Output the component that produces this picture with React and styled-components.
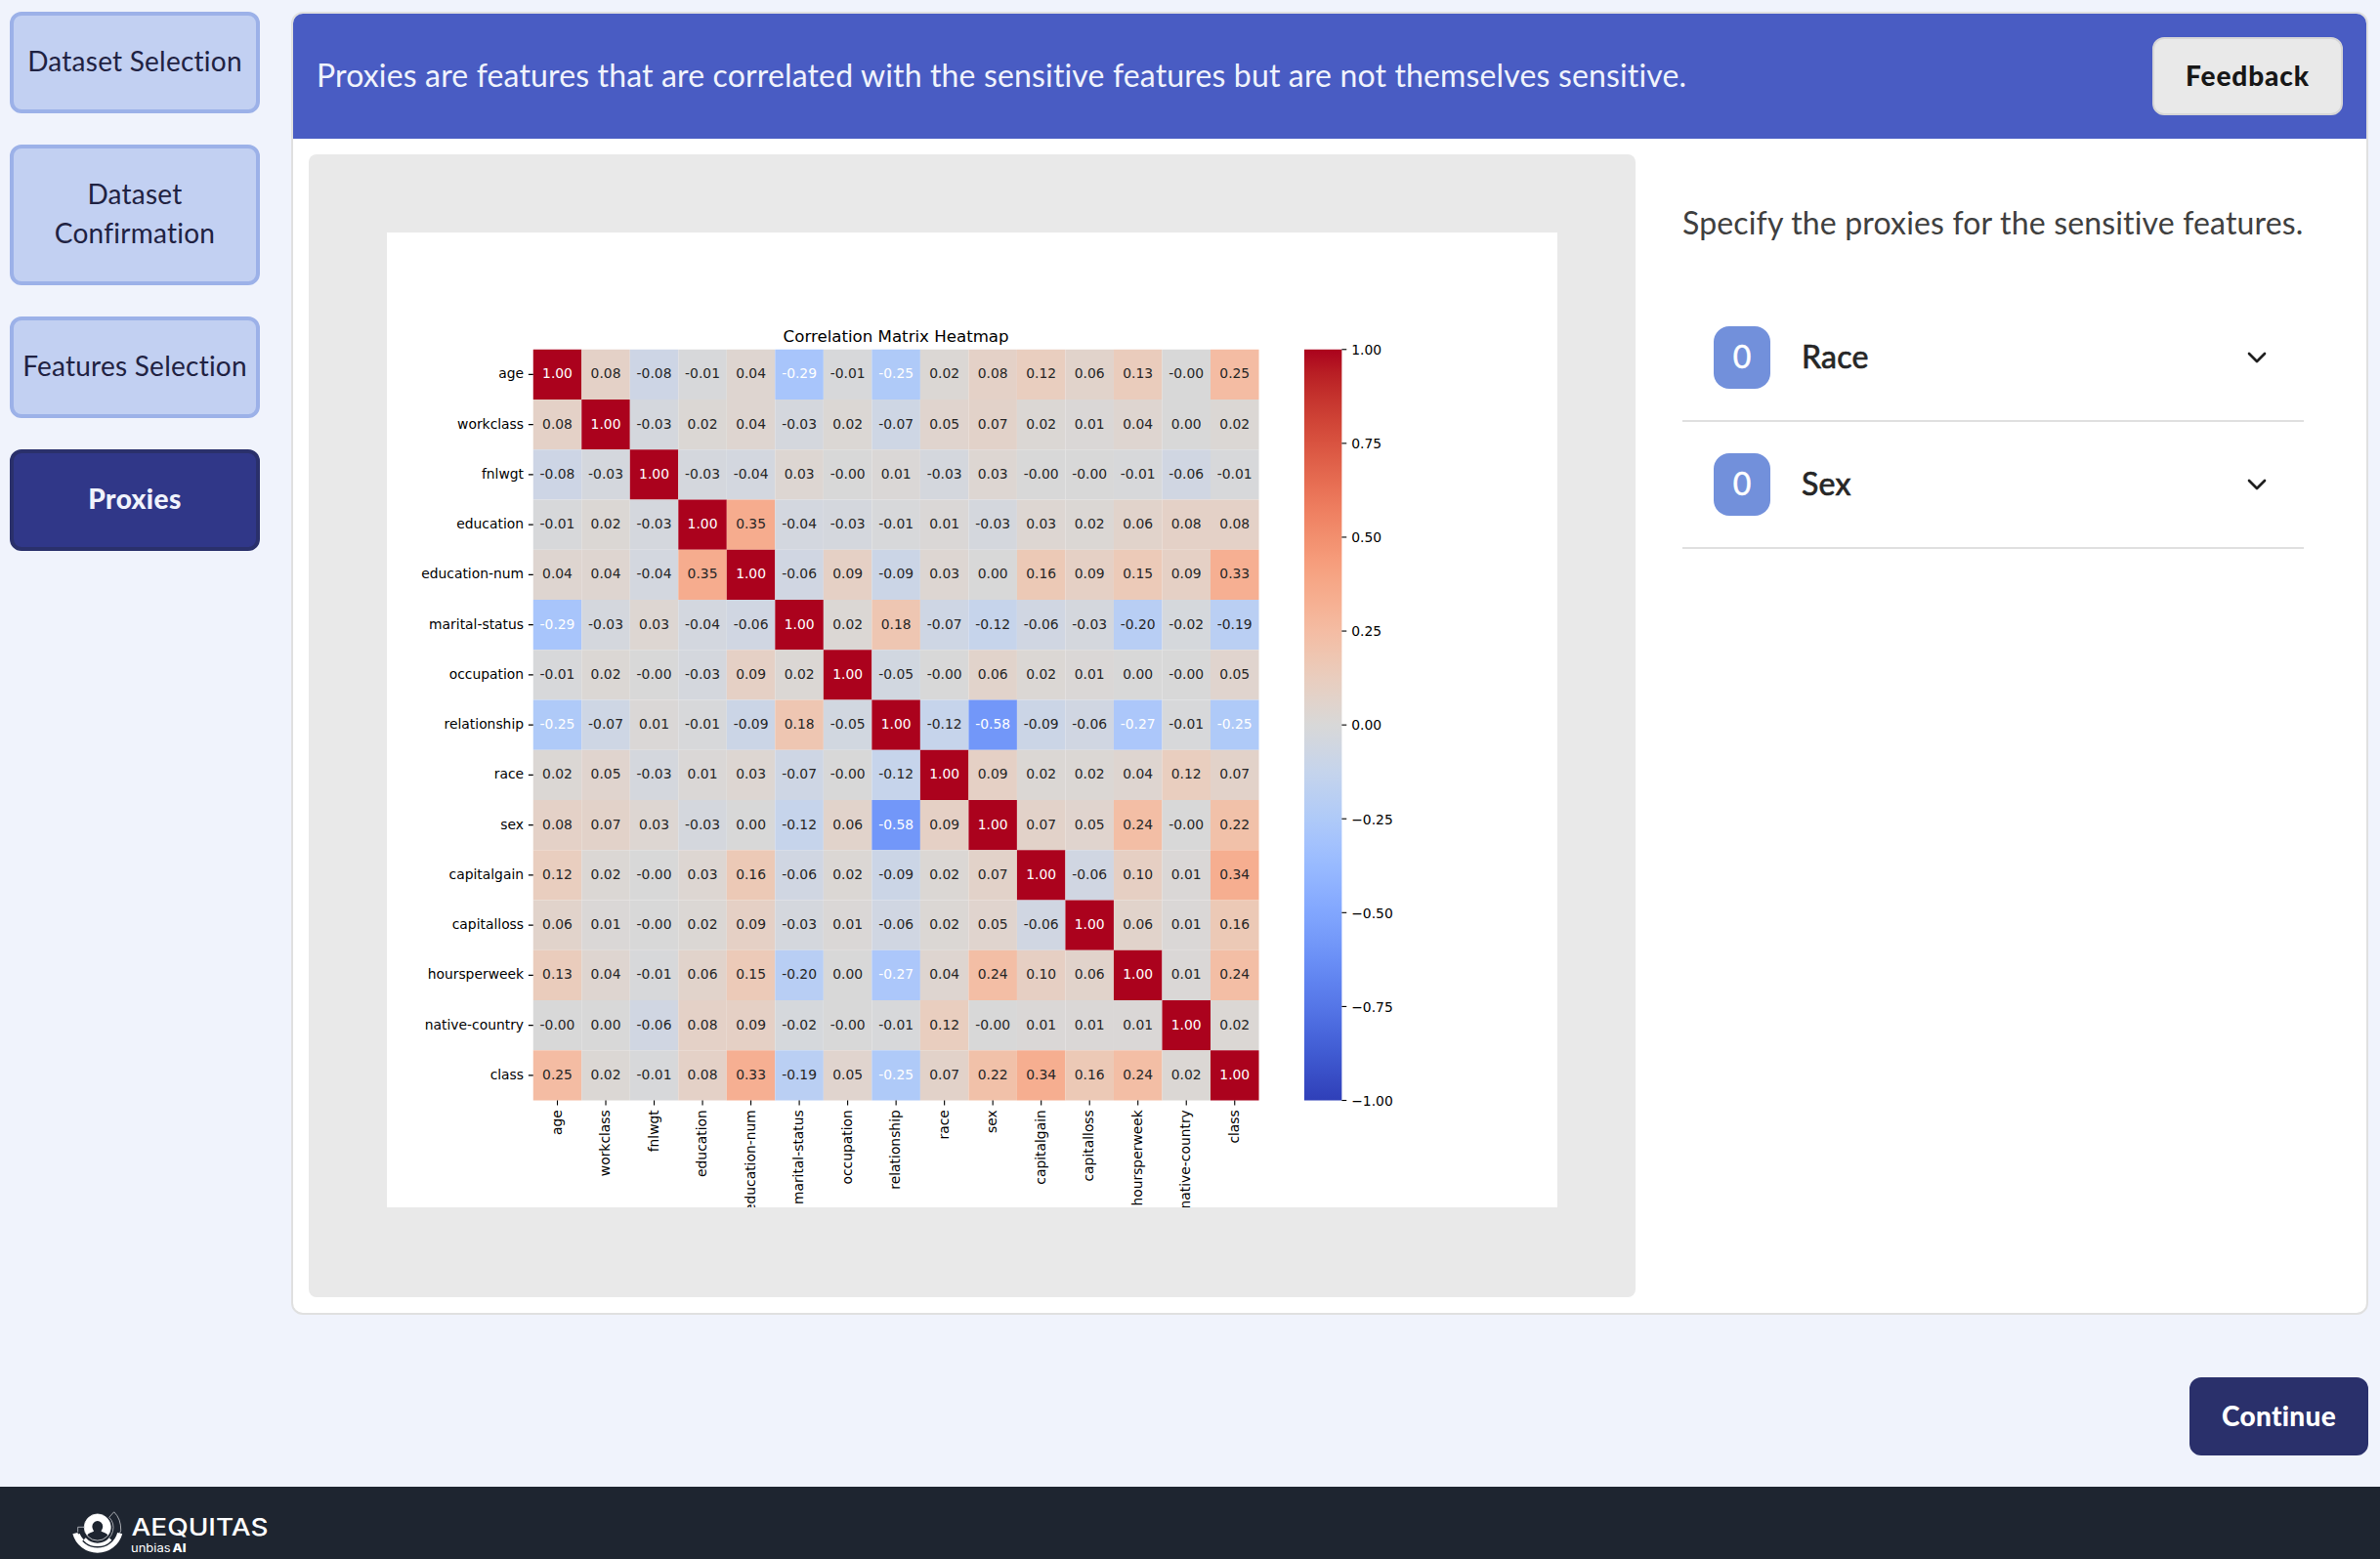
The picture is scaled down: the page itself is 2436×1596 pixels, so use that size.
import React from "react";
import styled, { createGlobalStyle } from "styled-components";

const GlobalStyle = createGlobalStyle`
  * { box-sizing: border-box; }
  body {
    margin: 0;
    background: #f0f3fc;
    font-family: Lato, "Open Sans", sans-serif;
    color: #1f2242;
  }
`;

const Page = styled.div`
  display: flex;
  flex-direction: column;
  height: 1596px;
  overflow: hidden;
`;

const Workspace = styled.div`
  display: flex;
  gap: 32px;
  height: 1522px;
  padding: 12px 12px 0 10px;
`;

const Sidebar = styled.nav`
  display: flex;
  flex-direction: column;
  gap: 32px;
  width: 256px;
  flex: none;
`;

const Step = styled.button`
  min-height: 104px;
  padding: 26px 4px 30px;
  border: 4px solid ${(p) => (p.$active ? "#2a306b" : "#9cb1e8")};
  border-radius: 12px;
  background: ${(p) => (p.$active ? "#303788" : "#c2d0f2")};
  color: ${(p) => (p.$active ? "#f0f3fc" : "#1f2242")};
  font: ${(p) => (p.$active ? 900 : 400)} 28px/40px Lato, sans-serif;
  letter-spacing: ${(p) => (p.$active ? 0.4 : 0.24)}px;
`;

const Main = styled.main`
  display: flex;
  flex-direction: column;
  flex: 1;
  min-width: 0;
  align-items: flex-end;
`;

const Card = styled.section`
  display: flex;
  flex-direction: column;
  width: 100%;
  height: 1334px;
  border: 2px solid #e0e0e0;
  border-radius: 12px;
  background: #fff;
  overflow: hidden;
`;

const CardHeader = styled.header`
  display: flex;
  align-items: center;
  justify-content: space-between;
  height: 128px;
  flex: none;
  padding: 0 24px;
  background: #495cc3;
`;

const HeaderText = styled.p`
  margin: 0;
  padding-bottom: 3px;
  color: #f0f3fc;
  font-size: 32px;
  line-height: 48px;
  letter-spacing: 0.15px;
  white-space: nowrap;
`;

const Button = styled.button`
  height: 80px;
  width: ${(p) => p.$width}px;
  padding: 0 0 3px;
  border: 2px solid ${(p) => (p.$primary ? "#2a306b" : "#d6d6d6")};
  border-radius: 12px;
  background: ${(p) => (p.$primary ? "#2a306b" : "#e9e9e9")};
  color: ${(p) => (p.$primary ? "#fff" : "#171717")};
  font: 900 28px/40px Lato, sans-serif;
  letter-spacing: ${(p) => (p.$primary ? 0.3 : 0.9)}px;
`;

const CardBody = styled.div`
  display: flex;
  flex: 1;
  gap: 48px;
  padding: 16px 64px 16px 16px;
`;

const Figure = styled.figure`
  width: 1358px;
  height: 1170px;
  flex: none;
  margin: 0;
  padding: 80px;
  border-radius: 8px;
  background: #e9e9e9;
`;

const Chart = styled.svg`
  display: block;
  width: 1198px;
  height: 998px;
  background: #fff;
  font-family: "DejaVu Sans", sans-serif;
  font-size: 13.889px;
`;

const Panel = styled.aside`
  flex: 1;
  min-width: 0;
  padding-top: 46px;
`;

const Prompt = styled.p`
  margin: 0 0 50px;
  color: #404040;
  font-size: 32px;
  line-height: 48px;
  letter-spacing: 0.16px;
  white-space: nowrap;
`;

const FeatureRow = styled.div`
  display: flex;
  align-items: center;
  gap: 32px;
  height: 130px;
  padding: 0 32px;
  border-bottom: 2px solid #e0e0e0;
`;

const Count = styled.span`
  display: flex;
  align-items: center;
  justify-content: center;
  width: 58px;
  height: 64px;
  padding-bottom: 3px;
  border-radius: 16px;
  background: #7290db;
  color: #fff;
  font-size: 32px;
  -webkit-text-stroke: 0.5px #fff;
`;

const FeatureName = styled.span`
  flex: 1;
  padding-bottom: 3px;
  color: #262626;
  font-size: 32px;
  letter-spacing: 0.3px;
  -webkit-text-stroke: 0.7px #262626;
`;

const Chevron = styled.svg`
  width: 32px;
  height: 32px;
  fill: none;
  stroke: #1f1f1f;
  stroke-width: 2;
  stroke-linecap: round;
  stroke-linejoin: round;
`;

const ContinueSlot = styled.div`
  margin-top: 64px;
`;

const Footer = styled.footer`
  display: flex;
  height: 74px;
  padding: 22px 0 0 72px;
  background: #1e2530;
`;

const Logo = styled.svg`
  width: 206px;
  height: 50px;
  overflow: visible;
`;

const FEATURES = [
  "age", "workclass", "fnlwgt", "education", "education-num",
  "marital-status", "occupation", "relationship", "race", "sex",
  "capitalgain", "capitalloss", "hoursperweek", "native-country", "class",
];

// Lower triangle of the symmetric correlation matrix, diagonal included.
const CORRELATION = [
  "1.00",
  "0.08 1.00",
  "-0.08 -0.03 1.00",
  "-0.01 0.02 -0.03 1.00",
  "0.04 0.04 -0.04 0.35 1.00",
  "-0.29 -0.03 0.03 -0.04 -0.06 1.00",
  "-0.01 0.02 -0.00 -0.03 0.09 0.02 1.00",
  "-0.25 -0.07 0.01 -0.01 -0.09 0.18 -0.05 1.00",
  "0.02 0.05 -0.03 0.01 0.03 -0.07 -0.00 -0.12 1.00",
  "0.08 0.07 0.03 -0.03 0.00 -0.12 0.06 -0.58 0.09 1.00",
  "0.12 0.02 -0.00 0.03 0.16 -0.06 0.02 -0.09 0.02 0.07 1.00",
  "0.06 0.01 -0.00 0.02 0.09 -0.03 0.01 -0.06 0.02 0.05 -0.06 1.00",
  "0.13 0.04 -0.01 0.06 0.15 -0.20 0.00 -0.27 0.04 0.24 0.10 0.06 1.00",
  "-0.00 0.00 -0.06 0.08 0.09 -0.02 -0.00 -0.01 0.12 -0.00 0.01 0.01 0.01 1.00",
  "0.25 0.02 -0.01 0.08 0.33 -0.19 0.05 -0.25 0.07 0.22 0.34 0.16 0.24 0.02 1.00",
].map((row) => row.split(" "));

const COOLWARM = [
  [59, 76, 192], [68, 90, 204], [77, 104, 215], [87, 117, 225], [98, 130, 234],
  [108, 142, 241], [119, 154, 247], [130, 165, 251], [141, 176, 254],
  [152, 185, 255], [163, 194, 255], [174, 201, 253], [184, 208, 249],
  [194, 213, 244], [204, 217, 238], [213, 219, 230], [221, 221, 221],
  [229, 216, 209], [236, 211, 197], [241, 204, 185], [245, 196, 173],
  [247, 187, 160], [247, 177, 148], [247, 166, 135], [244, 154, 123],
  [241, 141, 111], [236, 127, 99], [229, 112, 88], [222, 96, 77],
  [213, 80, 66], [203, 62, 56], [192, 40, 47], [180, 4, 38],
];

const tone = (c) => Math.round(255 * Math.pow(c / 255, 1.15));

function colorAt(value) {
  const position = ((value + 1) / 2) * (COOLWARM.length - 1);
  const low = Math.min(Math.floor(position), COOLWARM.length - 2);
  const mix = position - low;
  const rgb = COOLWARM[low].map((c, i) => tone(c + (COOLWARM[low + 1][i] - c) * mix));
  return `rgb(${rgb.join(",")})`;
}

const AXES = { x: 150, y: 120, w: 744, h: 770.3 };
const CELL_W = AXES.w / 15;
const CELL_H = AXES.h / 15;
const BAR = { x: 940.5, w: 38.5 };
const TICKS = ["1.00", "0.75", "0.50", "0.25", "0.00", "−0.25", "−0.50", "−0.75", "−1.00"];

function Heatmap() {
  const bottom = AXES.y + AXES.h;
  return (
    <Chart viewBox="0 0 1200 1000" preserveAspectRatio="none">
      <defs>
        <linearGradient id="coolwarm" x1="0" y1="1" x2="0" y2="0">
          {COOLWARM.map((_, i) => (
            <stop key={i} offset={i / 32} stopColor={colorAt(i / 16 - 1)} />
          ))}
        </linearGradient>
      </defs>
      <text x={AXES.x + AXES.w / 2} y="111.8" textAnchor="middle" fontSize="16.667">
        Correlation Matrix Heatmap
      </text>
      {FEATURES.map((rowName, r) =>
        FEATURES.map((colName, c) => {
          const label = CORRELATION[Math.max(r, c)][Math.min(r, c)];
          const value = Number(label);
          const x = AXES.x + c * CELL_W;
          const y = AXES.y + r * CELL_H;
          return (
            <g key={rowName + colName}>
              <rect x={x} y={y} width={CELL_W} height={CELL_H} fill={colorAt(value)} />
              <text
                x={x + CELL_W / 2}
                y={y + CELL_H / 2 + 3.9}
                textAnchor="middle"
                fill={value < -0.24 || value === 1 ? "#fff" : "#262626"}
              >
                {label}
              </text>
            </g>
          );
        })
      )}
      {FEATURES.map((name, i) => {
        const y = AXES.y + (i + 0.5) * CELL_H;
        const x = AXES.x + (i + 0.5) * CELL_W;
        return (
          <g key={name}>
            <path d={`M${AXES.x - 4.9} ${y}H${AXES.x}M${x} ${bottom}v4.9`} stroke="#000" strokeWidth="1.11" />
            <text x={AXES.x - 9.7} y={y + 4} textAnchor="end">{name}</text>
            <text transform={`translate(${x + 4.2} ${bottom + 9.7}) rotate(-90)`} textAnchor="end">{name}</text>
          </g>
        );
      })}
      <rect x={BAR.x} y={AXES.y} width={BAR.w} height={AXES.h} fill="url(#coolwarm)" />
      {TICKS.map((label, i) => {
        const y = AXES.y + (i * AXES.h) / 8;
        return (
          <g key={label}>
            <path d={`M${BAR.x + BAR.w} ${y}h4.9`} stroke="#000" strokeWidth="1.11" />
            <text x={BAR.x + BAR.w + 9.9} y={y + 5.3}>{label}</text>
          </g>
        );
      })}
    </Chart>
  );
}

function Feature({ name }) {
  return (
    <FeatureRow>
      <Count>0</Count>
      <FeatureName>{name}</FeatureName>
      <Chevron viewBox="0 0 24 24"><path d="m6 9 6 6 6-6" /></Chevron>
    </FeatureRow>
  );
}

function AequitasLogo() {
  return (
    <Logo viewBox="72 22 206 50">
      <g fill="none" stroke="#fff">
        <path d="M76.900 47.600A23.700 23.700 0 0 0 122.700 47.600" strokeWidth="5.200" />
        <path d="M80 48.500A20.800 20.800 0 0 0 84.500 55.500" strokeWidth="3.400" />
        <path d="M86.500 53.500A17.900 17.900 0 0 0 113.100 53.500" strokeWidth="3.400" />
        <circle cx="99.800" cy="41.500" r="13.600" strokeWidth="0.700" />
      </g>
      <path d="M89 49.700A13.500 13.500 0 1 1 110.600 49.700C109 47.500 106 46.800 103.700 45.800C103.300 44.700 105.200 43.800 105.200 40.500A5.400 5.400 0 0 0 94.400 40.500C94.400 43.800 96.300 44.700 95.900 45.800C93.600 46.800 90.600 47.500 89 49.700Z" fill="#fff" />
      <path
        d="M86.300 41.300H79.700V46.500M111.700 31.300L116.700 25.800Q124 33 123.700 44.700L122.500 48M111.700 31.300Q117.500 37.500 115.500 45.500Q114 50.500 111.500 52.500"
        fill="none"
        stroke="#dfe1e5"
        strokeWidth="0.700"
      />
      <text x="134.500" y="49.700" fill="#fff" fontFamily="Inter" fontSize="24.500" fontWeight="500" textLength="140" lengthAdjust="spacingAndGlyphs">AEQUITAS</text>
      <text x="134" y="67" fill="#fff" fontFamily="Inter" fontSize="11.500" textLength="40.500" lengthAdjust="spacingAndGlyphs">unbias</text>
      <text x="176.500" y="67" fill="#fff" fontFamily="Inter" fontSize="11.500" fontWeight="800" textLength="14" lengthAdjust="spacingAndGlyphs">AI</text>
    </Logo>
  );
}

export default function App() {
  return (
    <Page>
      <GlobalStyle />
      <Workspace>
        <Sidebar>
          <Step>Dataset Selection</Step>
          <Step>Dataset<br />Confirmation</Step>
          <Step>Features Selection</Step>
          <Step $active>Proxies</Step>
        </Sidebar>
        <Main>
          <Card>
            <CardHeader>
              <HeaderText>
                Proxies are features that are correlated with the sensitive features but are not themselves sensitive.
              </HeaderText>
              <Button $width={195}>Feedback</Button>
            </CardHeader>
            <CardBody>
              <Figure><Heatmap /></Figure>
              <Panel>
                <Prompt>Specify the proxies for the sensitive features.</Prompt>
                <Feature name="Race" />
                <Feature name="Sex" />
              </Panel>
            </CardBody>
          </Card>
          <ContinueSlot>
            <Button $primary $width={183}>Continue</Button>
          </ContinueSlot>
        </Main>
      </Workspace>
      <Footer><AequitasLogo /></Footer>
    </Page>
  );
}
